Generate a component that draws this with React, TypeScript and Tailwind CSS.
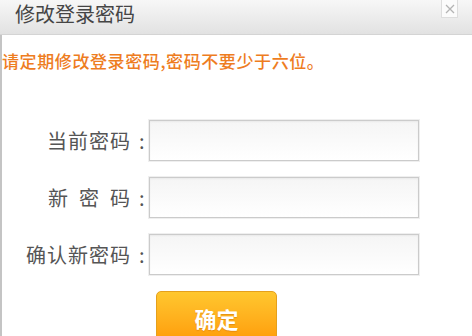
import React from "react";

const rows = [
  { label: "当前密码", gap: "gap-[1px]" },
  { label: "新密码", gap: "gap-[11px]" },
  { label: "确认新密码", gap: "gap-[1px]" },
];

const App: React.FC = () => {
  return (
    <div className="w-[472px] h-[336px] overflow-hidden bg-white font-['Noto_Sans_CJK_SC','Liberation_Sans',sans-serif]">
      <div className="h-[35px] flex items-start justify-between border-b border-[#d4d4d4] bg-gradient-to-b from-[#f7f7f7] to-[#e2e2e2]">
        <span className="pl-[15px] pt-[4px] text-[20px] leading-[20px] text-[#454545]">
          修改登录密码
        </span>
        <button className="mr-[14px] w-[17px] h-[18px] flex items-center justify-center bg-[#fbfbfb] border border-t-0 border-[#dddddd]">
          <svg width="10" height="10" viewBox="0 0 10 10" className="text-[#b4b4b4]">
            <path d="M1 1L9 9M9 1L1 9" stroke="currentColor" strokeWidth="1.3" />
          </svg>
        </button>
      </div>

      <div className="h-[301px] border-l-2 border-[#c4c4c4]">
        <p className="pt-[17px] text-[17px] leading-[17px] tracking-[0.6px] font-medium text-[#ee7d1f]">
          请定期修改登录密码,密码不要少于六位。
        </p>

        <div className="mt-[51px] flex flex-col gap-[16px]">
          {rows.map((row, i) => (
            <div key={i} className="flex items-center">
              <div className="w-[147px] flex items-center justify-end text-[20px] leading-[20px] text-[#555555]">
                <span className={`flex ${row.gap}`}>
                  {row.label.split("").map((ch, j) => (
                    <span key={j}>{ch}</span>
                  ))}
                </span>
                <span className="w-[19px] pl-[9px]">:</span>
              </div>
              <input
                type="password"
                className="w-[270px] h-[41px] border border-[#cbcbcb] bg-gradient-to-b from-[#f5f5f5] to-white shadow-[0_0_0_1px_#efefef,inset_0_1px_2px_rgba(0,0,0,0.05)] outline-none"
              />
            </div>
          ))}
        </div>

        <div className="mt-[16px] pl-[154px]">
          <button className="w-[121px] h-[56px] pt-[15px] flex justify-center rounded-[5px] border border-[#e5a01c] bg-gradient-to-b from-[#ffc72e] to-[#ff9800] text-white text-[22px] leading-[22px] font-bold [text-shadow:0_1px_1px_rgba(180,90,0,0.35)]">
            确定
          </button>
        </div>
      </div>
    </div>
  );
};

export default App;
